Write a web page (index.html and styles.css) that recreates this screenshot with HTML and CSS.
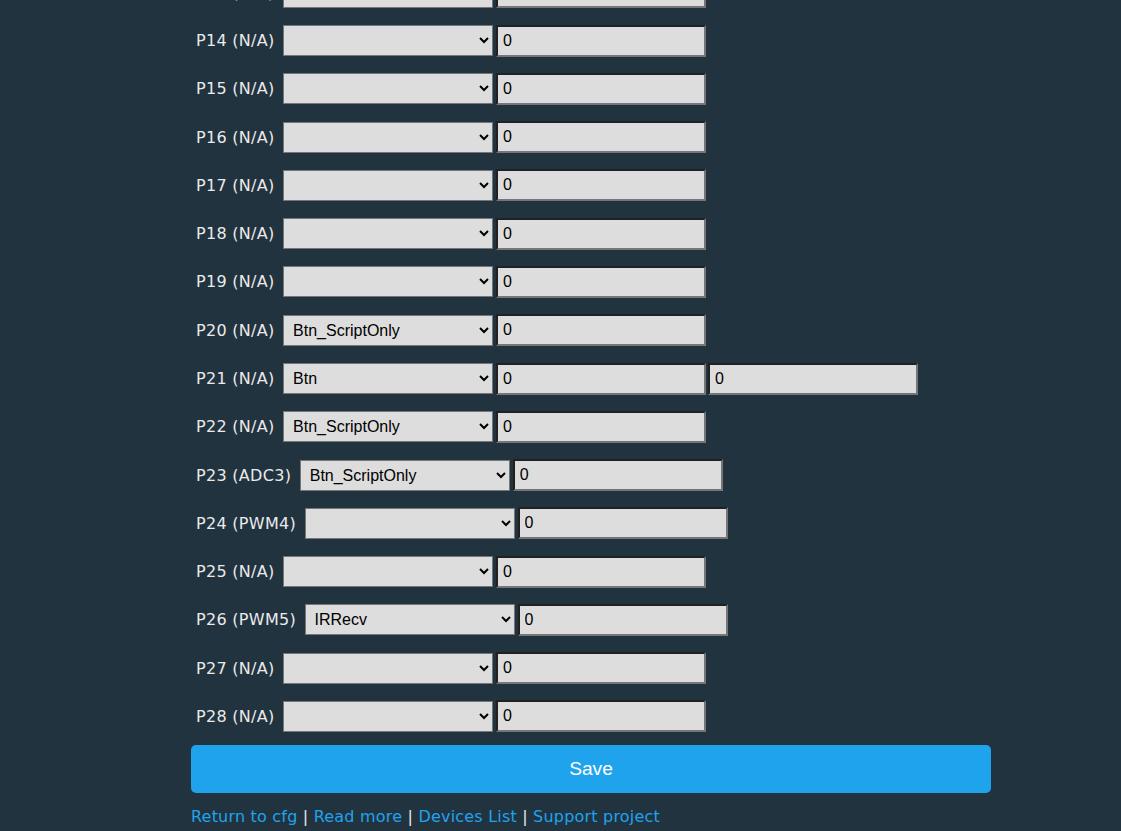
FILE: index.html
```html
<!DOCTYPE html>
<html>
<head>
<meta charset="utf-8">
<link rel="stylesheet" href="styles.css">
</head>
<body>
<div class="page">
  <form class="pins">
    <div class="row"><span class="lbl">P13 (N/A)</span><select class="sel"><option></option><option>Btn</option></select><input class="val" value="0"></div>
    <div class="row"><span class="lbl">P14 (N/A)</span><select class="sel"><option></option><option>Btn</option></select><input class="val" value="0"></div>
    <div class="row"><span class="lbl">P15 (N/A)</span><select class="sel"><option></option><option>Btn</option></select><input class="val" value="0"></div>
    <div class="row"><span class="lbl">P16 (N/A)</span><select class="sel"><option></option><option>Btn</option></select><input class="val" value="0"></div>
    <div class="row"><span class="lbl">P17 (N/A)</span><select class="sel"><option></option><option>Btn</option></select><input class="val" value="0"></div>
    <div class="row"><span class="lbl">P18 (N/A)</span><select class="sel"><option></option><option>Btn</option></select><input class="val" value="0"></div>
    <div class="row"><span class="lbl">P19 (N/A)</span><select class="sel"><option></option><option>Btn</option></select><input class="val" value="0"></div>
    <div class="row"><span class="lbl">P20 (N/A)</span><select class="sel"><option></option><option selected>Btn_ScriptOnly</option></select><input class="val" value="0"></div>
    <div class="row"><span class="lbl">P21 (N/A)</span><select class="sel"><option></option><option selected>Btn</option></select><input class="val" value="0"><input class="val" value="0"></div>
    <div class="row"><span class="lbl">P22 (N/A)</span><select class="sel"><option></option><option selected>Btn_ScriptOnly</option></select><input class="val" value="0"></div>
    <div class="row"><span class="lbl">P23 (ADC3)</span><select class="sel"><option></option><option selected>Btn_ScriptOnly</option></select><input class="val" value="0"></div>
    <div class="row"><span class="lbl">P24 (PWM4)</span><select class="sel"><option></option><option>PWM</option></select><input class="val" value="0"></div>
    <div class="row"><span class="lbl">P25 (N/A)</span><select class="sel"><option></option><option>Btn</option></select><input class="val" value="0"></div>
    <div class="row"><span class="lbl">P26 (PWM5)</span><select class="sel"><option></option><option selected>IRRecv</option></select><input class="val" value="0"></div>
    <div class="row"><span class="lbl">P27 (N/A)</span><select class="sel"><option></option><option>Btn</option></select><input class="val" value="0"></div>
    <div class="row"><span class="lbl">P28 (N/A)</span><select class="sel"><option></option><option>Btn</option></select><input class="val" value="0"></div>
    <button type="button" class="save">Save</button>
  </form>
  <div class="links"><a href="#">Return to cfg</a> | <a href="#">Read more</a> | <a href="#">Devices List</a> | <a href="#">Support project</a></div>
</div>
</body>
</html>
```
FILE: styles.css
```css
html, body {
  margin: 0;
  padding: 0;
  background: #223340;
  overflow: hidden;
}
body {
  font-family: "DejaVu Sans", Verdana, sans-serif;
  font-size: 16px;
  color: #eaeaea;
}
.page {
  width: 800px;
  margin-left: 191px;
  margin-top: -31.9px;
}
.pins {
  margin: 0;
}
.row {
  height: 48.29px;
  display: flex;
  align-items: center;
  padding-left: 5px;
}
.lbl {
  letter-spacing: 0.3px;
  margin-right: 8.5px;
  white-space: nowrap;
}
.sel {
  width: 210px;
  height: 31px;
  box-sizing: border-box;
  background: #dddddd;
  color: #000;
  border: 1px solid #767676;
  border-radius: 0;
  font-family: "Liberation Sans", Arial, sans-serif;
  font-size: 16px;
  padding: 0 0 0 5px;
  margin: 0 3px 0 0;
}
.val {
  width: 210px;
  height: 32px;
  box-sizing: border-box;
  background: #dddddd;
  color: #000;
  border: 2px inset #767676;
  font-family: "Liberation Sans", Arial, sans-serif;
  font-size: 16px;
  padding: 5px;
  margin: 0 2px 0 0;
}
.save {
  display: block;
  width: 800px;
  height: 48px;
  margin-top: 4.4px;
  border: 0;
  border-radius: 5px;
  background: #1fa3ec;
  color: #fff;
  font-family: "Liberation Sans", Arial, sans-serif;
  font-size: 19.2px;
  cursor: pointer;
}
.links {
  margin-top: 14px;
  line-height: 20px;
  letter-spacing: 0.2px;
  color: #eaeaea;
}
.links a {
  color: #1fa3ec;
  text-decoration: none;
}
```
